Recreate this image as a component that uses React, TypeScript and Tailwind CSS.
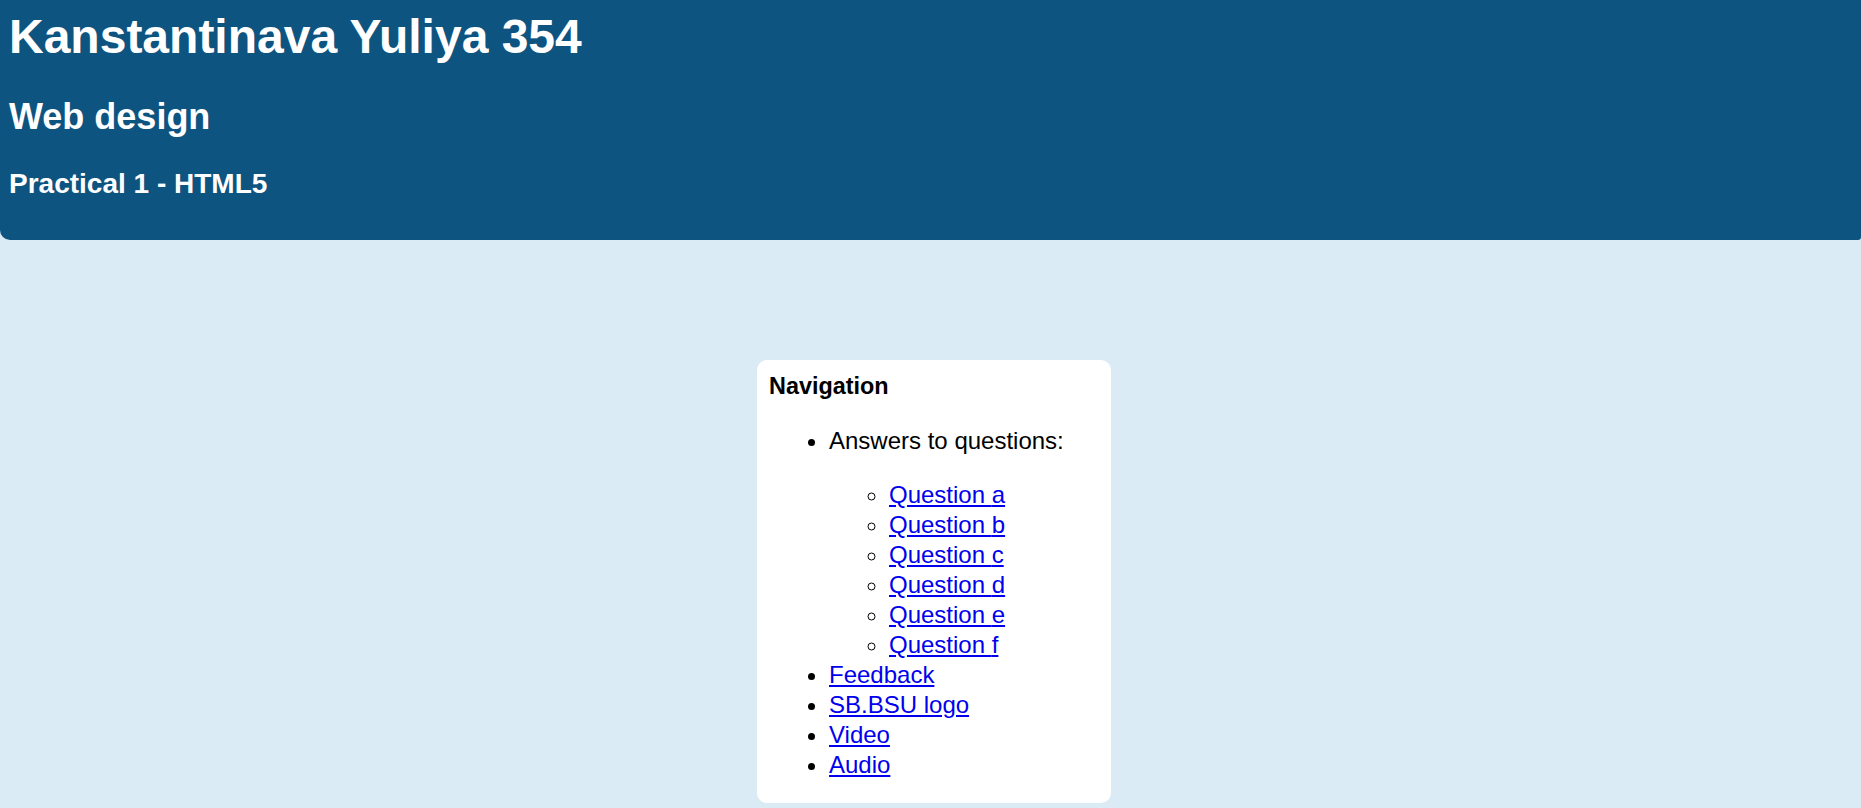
export default function App() {
    const questions = ['a', 'b', 'c', 'd', 'e', 'f'];
    const links = ['Feedback', 'SB.BSU logo', 'Video', 'Audio'];

    return (
        <div className="min-h-[808px] bg-[#daebf5] font-['Liberation_Sans',Arial,sans-serif] text-black overflow-hidden">
            {/* Header */}
            <header className="h-[240px] bg-[#0e5480] text-white pt-[9px] pl-[9px] rounded-bl-[10px] rounded-br-[3px]">
                <h1 className="m-0 text-[48px] leading-[55px] font-bold">Kanstantinava Yuliya 354</h1>
                <h2 className="mt-[32px] text-[36px] leading-[41px] font-bold">Web design</h2>
                <h3 className="mt-[31px] text-[28px] leading-[32px] font-bold">Practical 1 - HTML5</h3>
            </header>

            {/* Navigation card */}
            <main className="flex justify-center pl-[7px] pt-[120px]">
                <nav className="w-[354px] bg-white rounded-[10px] pt-[13px] pl-[12px] pr-[12px]">
                    <h3 className="m-0 text-[23.4px] leading-[27px] font-bold">Navigation</h3>
                    <ul className="mt-[26px] mb-[23px] pl-[60px] list-disc text-[24px] leading-[30px]">
                        <li>
                            Answers to questions:
                            <ul className="mt-[24px] pl-[60px] list-[circle]">
                                {questions.map((q) => (
                                    <li key={q}>
                                        <a href={`#q-${q}`} className="text-[#0000ee] underline">
                                            Question {q}
                                        </a>
                                    </li>
                                ))}
                            </ul>
                        </li>
                        {links.map((l) => (
                            <li key={l}>
                                <a href="#" className="text-[#0000ee] underline">
                                    {l}
                                </a>
                            </li>
                        ))}
                    </ul>
                </nav>
            </main>
        </div>
    );
}
